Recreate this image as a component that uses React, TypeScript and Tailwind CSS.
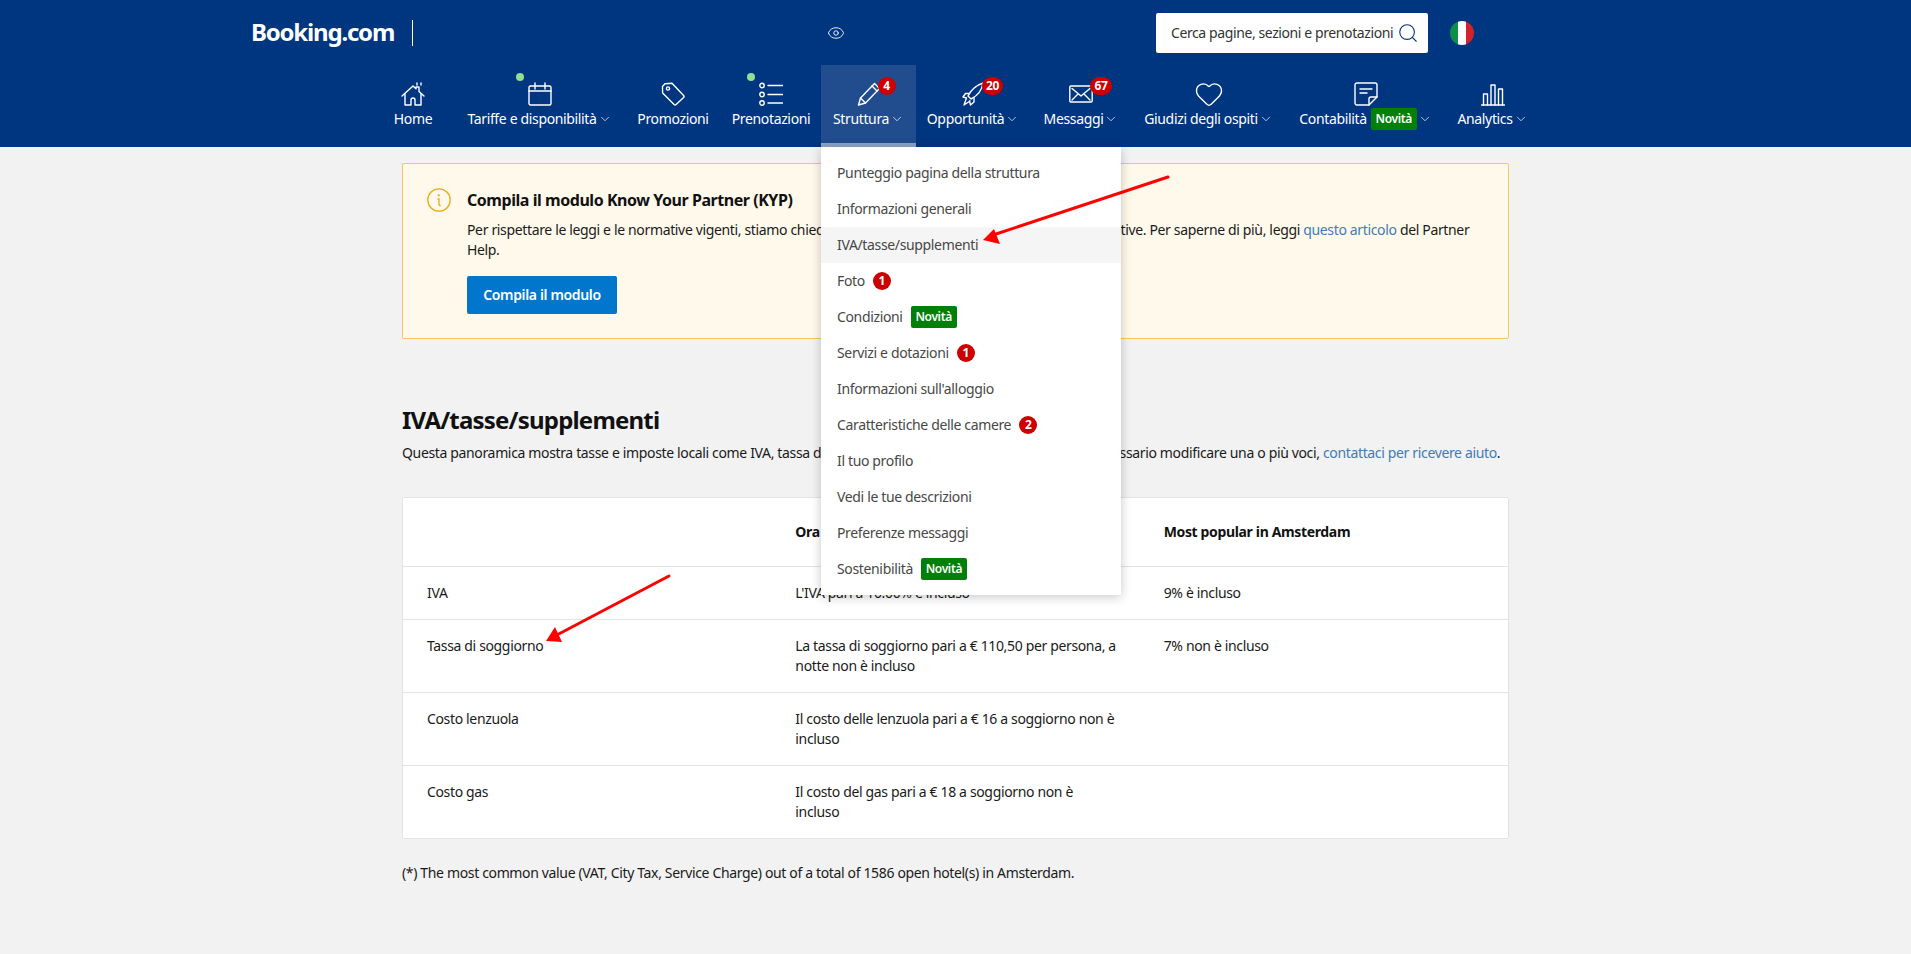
import { ChevronDown, Eye, Heart, Search } from 'lucide-react'
import type { ReactNode } from 'react'

const stroke = { fill: 'none', stroke: 'white', strokeWidth: 1.4, strokeLinecap: 'round', strokeLinejoin: 'round' } as const

const HomeIcon = () => (
  <svg viewBox="0 0 24 24" className="w-6 h-6" {...stroke}>
    <path d="M1 14 12 4l3 2.7V5h3v4.4l5 4.6" />
    <path d="M4 12v11h6v-5a2 2 0 0 1 4 0v5h6V12" />
    <path d="M16 1v2M20 1v2" />
  </svg>
)
const CalendarIcon = () => (
  <svg viewBox="0 0 24 24" className="w-6 h-6" {...stroke}>
    <rect x="1" y="4" width="22" height="19" rx="1.5" />
    <path d="M1 9h22M7 1v6M17 1v6" />
  </svg>
)
const TagIcon = () => (
  <svg viewBox="0 0 24 24" className="w-6 h-6" {...stroke}>
    <path d="M1.500 4.500 4 1.700 11 1.300 22.600 13.500a1.500 1.500 0 0 1 0 2l-7.500 7a1.500 1.500 0 0 1-2 0L1.600 11Z" />
    <circle cx="7" cy="6.500" r="1.600" />
  </svg>
)
const ListIcon = () => (
  <svg viewBox="0 0 24 24" className="w-6 h-6" {...stroke}>
    <circle cx="3" cy="3.500" r="2.200" />
    <circle cx="3" cy="12.500" r="2.200" />
    <circle cx="3" cy="21" r="2.200" />
    <path d="M9 3.500h15M9 12.500h15M9 21h15" />
  </svg>
)
const PencilIcon = () => (
  <svg viewBox="0 0 24 24" className="w-6 h-6" {...stroke}>
    <path d="M1.500 23 3.500 16 17.500 1.500l5 5L8.500 21Z" />
    <path d="M3.500 16 8.500 21M15 4l5 5" />
  </svg>
)
const RocketIcon = () => (
  <svg viewBox="0 0 24 24" className="w-6 h-6" {...stroke}>
    <path d="M22 1C16 3 10 8 7 14l3 3C16 14 21 8 22 1Z" />
    <path d="M8 11.500H4.500L2 15l3.500 1M13 15.500V20l-3.500 3-1-4M5.500 16 3 23l6-4" />
  </svg>
)
const MailIcon = () => (
  <svg viewBox="0 0 24 24" className="w-6 h-6" {...stroke}>
    <rect x="0.800" y="4" width="22.400" height="16" rx="1.200" />
    <path d="M3 6.500 12 14l9-7.500M3 18l6-6M21 18l-6-6" />
  </svg>
)
const NoteIcon = () => (
  <svg viewBox="0 0 24 24" className="w-6 h-6" {...stroke}>
    <path d="M3 1h18a2 2 0 0 1 2 2v12l-8 8H3a2 2 0 0 1-2-2V3a2 2 0 0 1 2-2Z" />
    <path d="M23 15h-6a2 2 0 0 0-2 2v6M6 7h12M6 11h7" />
  </svg>
)
const BarsIcon = () => (
  <svg viewBox="0 0 24 24" className="w-6 h-6" {...stroke}>
    <path d="M0.500 23h23" />
    <path d="M2.500 23V12h4v11M10 23V3h4v20M17.500 23V7h4v16" />
  </svg>
)

function Novita() {
  return <span className="inline-flex items-center justify-center w-[46px] h-[22px] rounded-[2px] bg-[#008009] text-white text-xs font-semibold">Novità</span>
}

function Count({ n, className }: { n: string; className: string }) {
  return <span className={`absolute flex items-center justify-center h-[18px] rounded-full bg-[#cc0000] text-white text-xs font-bold ${className}`}>{n}</span>
}

type NavItem = {
  label: string
  icon: ReactNode
  width: string
  caret?: boolean
  dot?: boolean
  badge?: ReactNode
  novita?: boolean
  active?: boolean
}

const nav: NavItem[] = [
  { label: 'Home', icon: <HomeIcon />, width: 'w-[60px]' },
  { label: 'Tariffe e disponibilità', icon: <CalendarIcon />, width: 'w-[165px] ml-[14px]', caret: true, dot: true },
  { label: 'Promozioni', icon: <TagIcon />, width: 'w-[96px] ml-[3px]' },
  { label: 'Prenotazioni', icon: <ListIcon />, width: 'w-[100px]', dot: true },
  { label: 'Struttura', icon: <PencilIcon />, width: 'w-[95px]', caret: true, active: true, badge: <Count n="4" className="w-[18px] left-[21px] -top-[5px]" /> },
  { label: 'Opportunità', icon: <RocketIcon />, width: 'w-[114px]', caret: true, badge: <Count n="20" className="w-[21px] left-[21px] -top-[5px]" /> },
  { label: 'Messaggi', icon: <MailIcon />, width: 'w-[96px] ml-[3px]', caret: true, badge: <Count n="67" className="w-[22px] left-[21px] -top-[5px]" /> },
  { label: 'Giudizi degli ospiti', icon: <Heart className="w-[30px] h-[30px] shrink-0" strokeWidth={1.1} />, width: 'w-[151px] ml-[4px]', caret: true },
  { label: 'Contabilità', icon: <NoteIcon />, width: 'w-[155px] ml-[4px]', caret: true, novita: true },
  { label: 'Analytics', icon: <BarsIcon />, width: 'w-[91px] ml-[4px]', caret: true },
]

const menu: { label: string; count?: string; novita?: boolean; hover?: boolean }[] = [
  { label: 'Punteggio pagina della struttura' },
  { label: 'Informazioni generali' },
  { label: 'IVA/tasse/supplementi', hover: true },
  { label: 'Foto', count: '1' },
  { label: 'Condizioni', novita: true },
  { label: 'Servizi e dotazioni', count: '1' },
  { label: "Informazioni sull'alloggio" },
  { label: 'Caratteristiche delle camere', count: '2' },
  { label: 'Il tuo profilo' },
  { label: 'Vedi le tue descrizioni' },
  { label: 'Preferenze messaggi' },
  { label: 'Sostenibilità', novita: true },
]

const rows = [
  { name: 'IVA', now: "L'IVA pari a 10.00% è incluso", popular: '9% è incluso', h: 'h-[53px]', pad: 'pr-[18px]' },
  { name: 'Tassa di soggiorno', now: 'La tassa di soggiorno pari a € 110,50 per persona, a notte non è incluso', popular: '7% non è incluso', h: 'h-[73px]', pad: 'pr-[18px]' },
  { name: 'Costo lenzuola', now: 'Il costo delle lenzuola pari a € 16 a soggiorno non è incluso', popular: '', h: 'h-[73px]', pad: 'pr-[18px]' },
  { name: 'Costo gas', now: 'Il costo del gas pari a € 18 a soggiorno non è incluso', popular: '', h: 'h-[73px]', pad: 'pr-6' },
]

function Dropdown() {
  return (
    <div className="absolute left-0 top-[82px] z-20 w-[300px] bg-white py-2 shadow-[0_2px_10px_rgba(0,0,0,0.22)]">
      {menu.map((m) => (
        <div key={m.label} className={`flex items-center gap-2 h-9 px-4 text-sm text-[#474747] ${m.hover ? 'bg-[#f5f5f5]' : ''}`}>
          <span>{m.label}</span>
          {m.count && <span className="flex items-center justify-center w-[18px] h-[18px] rounded-full bg-[#cc0000] text-white text-xs font-bold">{m.count}</span>}
          {m.novita && <Novita />}
        </div>
      ))}
    </div>
  )
}

function Header() {
  return (
    <header className="bg-[#003580] h-[147px] text-white">
      <div className="flex items-center h-[65px]">
        <span className="ml-[251px] w-[145px] -mt-[2px] text-[24px] font-bold tracking-[-1.2px] whitespace-nowrap">Booking.com</span>
        <span className="ml-[16px] w-px h-[26px] bg-white" />
        <Eye className="ml-[414px] w-[18px] h-[18px]" strokeWidth={1.2} />
        <div className="ml-[311px] flex items-center justify-between w-[272px] h-10 pl-[15px] pr-[9px] rounded-[2px] bg-white">
          <span className="text-sm tracking-[-0.4px] text-[#333333] whitespace-nowrap">Cerca pagine, sezioni e prenotazioni</span>
          <Search className="w-[22px] h-[22px] text-[#003580] shrink-0" strokeWidth={1.2} />
        </div>
        <div className="ml-[22px] flex w-6 h-6 rounded-full overflow-hidden">
          <span className="flex-1 bg-[#0b8f4a]" />
          <span className="flex-1 bg-white" />
          <span className="flex-1 bg-[#d2232a]" />
        </div>
      </div>
      <nav className="flex ml-[383px] h-[82px]">
        {nav.map((item) => (
          <div
            key={item.label}
            className={`relative flex flex-col items-center shrink-0 pt-[17px] border-b-4 ${item.width} ${item.active ? 'bg-[#214d8f] border-[#8ca3c6]' : 'border-transparent'}`}
          >
            <div className="relative flex items-center justify-center w-6 h-6">
              {item.icon}
              {item.badge}
              {item.dot && <span className="absolute -left-[12px] -top-[9px] w-2 h-2 rounded-full bg-[#8fe08f]" />}
            </div>
            <div className="flex items-center h-5 mt-[3px] text-sm whitespace-nowrap">
              <span>{item.label}</span>
              {item.novita && <span className="ml-1"><Novita /></span>}
              {item.caret && <ChevronDown className="ml-[1px] w-[14px] h-[14px]" strokeWidth={1.2} />}
            </div>
            {item.active && <Dropdown />}
          </div>
        ))}
      </nav>
    </header>
  )
}

function Arrows() {
  return (
    <svg className="absolute inset-0 z-30 w-[1911px] h-[954px] pointer-events-none" viewBox="0 0 1911 954">
      <path d="M1168 177 990 236" stroke="#ff0000" strokeWidth="3" strokeLinecap="round" />
      <path d="M983 240 994 229 1000 244Z" fill="#ff0000" />
      <path d="M669 576 553 637" stroke="#ff0000" strokeWidth="3" strokeLinecap="round" />
      <path d="M546 641 555 627 562 642Z" fill="#ff0000" />
    </svg>
  )
}

export default function App() {
  return (
    <div className="relative min-h-screen bg-[#f2f2f2] text-[#1a1a1a] tracking-[-0.35px] font-['Noto_Sans',sans-serif]">
      <Header />
      <main className="w-[1107px] ml-[402px]">
        <div className="flex gap-4 mt-4 p-6 rounded-[2px] border border-[#f5c95c] bg-[#fff9eb]">
          <svg viewBox="0 0 24 24" className="w-6 h-6 shrink-0" fill="none" stroke="#e8ac1c" strokeWidth="1.300" strokeLinecap="round">
            <circle cx="12" cy="12" r="11.200" />
            <path d="M11 11h1v5.500c0 .8.400 1 1.200 1" />
            <circle cx="11.800" cy="7.300" r="0.500" />
          </svg>
          <div className="min-w-0 flex-1">
            <h2 className="h-6 leading-6 text-base font-bold tracking-[-0.45px] text-[#111111]">Compila il modulo Know Your Partner (KYP)</h2>
            <p className="mt-2 max-w-[1010px] text-sm leading-5">
              Per rispettare le leggi e le normative vigenti, stiamo chiedendo ai partner alcuni dati sulle tue attività ricettive. Per saperne di più, leggi{' '}
              <a className="text-[#3f7cb8]">questo articolo</a> del Partner Help.
            </p>
            <button className="mt-4 w-[150px] h-[38px] rounded-[2px] bg-[#0077cc] text-white text-sm font-semibold">Compila il modulo</button>
          </div>
        </div>

        <h1 className="mt-[65px] h-8 leading-8 text-2xl font-bold tracking-[-0.8px] text-[#111111]">IVA/tasse/supplementi</h1>
        <p className="mt-[7px] text-sm leading-5 whitespace-nowrap">
          Questa panoramica mostra tasse e imposte locali come IVA, tassa di soggiorno e altri costi della struttura. Se è necessario modificare una o più voci,{' '}
          <a className="text-[#3f7cb8]">contattaci per ricevere aiuto</a>.
        </p>

        <div className="mt-[34px] rounded-[2px] border border-[#e3e3e3] bg-white text-sm leading-5">
          <div className="grid grid-cols-3 h-[68px] items-center font-bold text-[#111111]">
            <div className="px-6" />
            <div className="px-6">Ora</div>
            <div className="px-6">Most popular in Amsterdam</div>
          </div>
          {rows.map((r) => (
            <div key={r.name} className={`grid grid-cols-3 border-t border-[#e3e3e3] pt-4 ${r.h}`}>
              <div className="px-6">{r.name}</div>
              <div className={`pl-6 ${r.pad}`}>{r.now}</div>
              <div className="px-6">{r.popular}</div>
            </div>
          ))}
        </div>

        <p className="mt-6 pb-[71px] text-sm leading-5">(*) The most common value (VAT, City Tax, Service Charge) out of a total of 1586 open hotel(s) in Amsterdam.</p>
      </main>
      <Arrows />
    </div>
  )
}
